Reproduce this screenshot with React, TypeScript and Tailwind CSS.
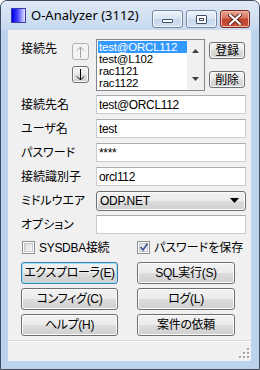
import React from "react";

const FONT =
  "font-[family-name:'Liberation_Sans','Noto_Sans_CJK_JP',sans-serif] [font-feature-settings:'palt']";

function Btn({
  children,
  className = "",
  focused = false,
}: {
  children: React.ReactNode;
  className?: string;
  focused?: boolean;
}) {
  return (
    <div
      className={`flex items-center justify-center rounded-[3px] border text-[12px] leading-none tracking-[-0.3px] text-black bg-[linear-gradient(#f2f2f2_0%,#ebebeb_50%,#dddddd_50%,#cfcfcf_100%)] ${
        focused
          ? "border-[#3c7fb1] shadow-[inset_0_0_0_1px_#a7e1f7]"
          : "border-[#707070] shadow-[inset_0_0_0_1px_#fbfbfb]"
      } ${className}`}
    >
      {children}
    </div>
  );
}

function Input({ value }: { value: string }) {
  return (
    <div className="flex h-[19px] w-[150px] items-center border border-[#c9ccd3] border-t-[#abadb3] bg-white pl-[2px] text-[12px] leading-none tracking-[-0.35px]">
      {value}
    </div>
  );
}

function Label({ text }: { text: string }) {
  return <div className="w-[75px] text-[12px] leading-none">{text}</div>;
}

function Row({ label, children }: { label: string; children: React.ReactNode }) {
  return (
    <div className="flex h-[19px] items-center">
      <Label text={label} />
      {children}
    </div>
  );
}

function Checkbox({ checked }: { checked: boolean }) {
  return (
    <div className="flex h-[13px] w-[13px] items-center justify-center border border-[#8e8f8f] bg-white">
      <div className="relative h-[9px] w-[9px] border border-[#c6c9ce] bg-[linear-gradient(135deg,#dcdedf,#f7f7f7)]">
        {checked && (
          <svg
            className="absolute left-[-1px] top-[-2px]"
            width="10"
            height="10"
            viewBox="0 0 10 10"
          >
            <path
              d="M1.5 5 L4 8 L8.5 1.5"
              fill="none"
              stroke="#4a5f97"
              strokeWidth="1.8"
            />
          </svg>
        )}
      </div>
    </div>
  );
}

function Arrow({ up, color }: { up: boolean; color: string }) {
  return (
    <svg width="9" height="12" viewBox="0 0 9 12">
      <g transform={up ? "" : "rotate(180 4.5 6)"}>
        <path d="M4.5 1 L4.5 12" stroke={color} strokeWidth="1" />
        <path d="M1 4.5 L4.5 1 L8 4.5" fill="none" stroke={color} strokeWidth="1" />
      </g>
    </svg>
  );
}

export default function App() {
  const items = ["test@ORCL112", "test@L102", "rac1121", "rac1122"];
  return (
    <div className={`h-[370px] w-[260px] bg-white ${FONT} text-black`}>
      <div className="flex h-[370px] w-[260px] flex-col rounded-t-[7px] border border-[#3f4d5e] bg-[#bcd3ed]">
        {/* Title bar */}
        <div className="relative flex h-[29px] items-center rounded-t-[6px] bg-[linear-gradient(#dfe9f6,#c6d9ef)] pl-[10px] pr-[9px]">
          <div className="h-[15px] w-[15px] border border-[#3a3aa8] bg-[linear-gradient(90deg,#0000e8,#3b3bff_40%,#e6e6ff)]" />
          <div className="ml-[5px] font-[family-name:'Noto_Sans',sans-serif] text-[13px] leading-none text-black [font-feature-settings:normal]">
            O-Analyzer (3112)
          </div>
          <div className="ml-auto flex items-center gap-[3px] self-start pt-[9px]">
            <div className="flex h-[18px] w-[31px] items-end justify-center rounded-[3px] border border-[#7489a5] bg-[linear-gradient(#eef4fb,#d7e4f3_50%,#c5d6ec_51%,#d3e2f4)] pb-[4px] shadow-[inset_0_0_0_1px_#f3f7fc]">
              <div className="h-[4px] w-[11px] rounded-[1px] border border-[#3d4f66] bg-white" />
            </div>
            <div className="flex h-[18px] w-[31px] items-center justify-center rounded-[3px] border border-[#7489a5] bg-[linear-gradient(#eef4fb,#d7e4f3_50%,#c5d6ec_51%,#d3e2f4)] shadow-[inset_0_0_0_1px_#f3f7fc]">
              <div className="flex h-[9px] w-[11px] items-center justify-center rounded-[1px] border border-[#3d4f66] bg-white">
                <div className="h-[3px] w-[5px] border border-[#3d4f66]" />
              </div>
            </div>
            <div className="flex h-[18px] w-[30px] items-center justify-center rounded-[3px] border border-[#7a2a20] bg-[linear-gradient(#e9a796,#d5725f_45%,#c0412d_50%,#c9553e)] shadow-[inset_0_0_0_1px_#eeb9ab]">
              <svg width="14" height="11" viewBox="0 0 14 11">
                <path
                  d="M2 1 L12 10 M12 1 L2 10"
                  stroke="#5a1f18"
                  strokeWidth="4"
                  strokeLinecap="round"
                />
                <path
                  d="M2 1 L12 10 M12 1 L2 10"
                  stroke="#ffffff"
                  strokeWidth="2.2"
                  strokeLinecap="round"
                />
              </svg>
            </div>
          </div>
        </div>

        {/* Client area */}
        <div className="ml-[7px] mr-[8px] flex h-[331px] flex-col bg-[#f0f0f0] pl-[13px]">
          {/* Top: connection list */}
          <div className="mt-[9px] flex h-[52px] items-start">
            <div className="mt-[4px] w-[51px] text-[12px] leading-none">接続先</div>
            <div className="flex w-[17px] flex-col">
              <Btn className="mt-[4px] h-[17px] w-[17px] border-[#adb2b5] shadow-none bg-[linear-gradient(#f4f4f4,#f4f4f4)]">
                <Arrow up color="#a0a0a0" />
              </Btn>
              <Btn className="mt-[6px] h-[17px] w-[17px]">
                <Arrow up={false} color="#000000" />
              </Btn>
            </div>
            <div className="ml-[7px] flex h-[52px] w-[109px] border border-[#828790] bg-white">
              <div className="flex flex-1 flex-col pt-[1px] pl-[1px]">
                {items.map((it, i) => (
                  <div
                    key={it}
                    className={`flex h-[12px] items-center overflow-hidden pl-[1px] text-[11.5px] leading-[12px] tracking-[-0.2px] ${
                      i === 0 ? "bg-[#3399ff] text-white" : "text-black"
                    }`}
                  >
                    {it}
                  </div>
                ))}
              </div>
              <div className="flex w-[17px] flex-col items-center justify-between bg-[#f0f0f0] py-[9px]">
                <svg width="7" height="4" viewBox="0 0 7 4">
                  <path d="M0 4 L3.5 0 L7 4 Z" fill="#404040" />
                </svg>
                <svg width="7" height="4" viewBox="0 0 7 4">
                  <path d="M0 0 L3.5 4 L7 0 Z" fill="#404040" />
                </svg>
              </div>
            </div>
            <div className="ml-[4px] flex flex-col">
              <Btn className="mt-[3px] h-[17px] w-[36px]">登録</Btn>
              <Btn className="mt-[12px] h-[17px] w-[36px]">削除</Btn>
            </div>
          </div>

          {/* Fields */}
          <div className="mt-[4px] flex flex-col gap-[5px]">
            <Row label="接続先名">
              <Input value="test@ORCL112" />
            </Row>
            <Row label="ユーザ名">
              <Input value="test" />
            </Row>
            <Row label="パスワード">
              <Input value="****" />
            </Row>
            <Row label="接続識別子">
              <Input value="orcl112" />
            </Row>
            <Row label="ミドルウエア">
              <div className="flex h-[20px] w-[150px] items-center rounded-[3px] border border-[#707070] bg-[linear-gradient(#f2f2f2_0%,#ebebeb_50%,#dddddd_50%,#cfcfcf_100%)] pl-[3px] pr-[6px] text-[12px] leading-none tracking-[-0.3px] shadow-[inset_0_0_0_1px_#fbfbfb]">
                <span>ODP.NET</span>
                <svg className="ml-auto" width="9" height="5" viewBox="0 0 9 5">
                  <path d="M0 0 L9 0 L4.5 5 Z" fill="#000" />
                </svg>
              </div>
            </Row>
            <Row label="オプション">
              <Input value="" />
            </Row>
          </div>

          {/* Checkboxes */}
          <div className="mt-[7px] flex h-[13px] items-center">
            <div className="ml-[1px] flex w-[115px] items-center">
              <Checkbox checked={false} />
              <span className="ml-[4px] text-[12px] leading-none tracking-[-0.3px]">SYSDBA接続</span>
            </div>
            <div className="flex items-center">
              <Checkbox checked={true} />
              <span className="ml-[4px] text-[12px] leading-none">パスワードを保存</span>
            </div>
          </div>

          {/* Buttons */}
          <div className="mt-[8px] grid w-[214px] grid-cols-[97px_98px] gap-x-[19px] gap-y-[4px]">
            <Btn className="h-[22px]" focused>
              エクスプローラ(E)
            </Btn>
            <Btn className="h-[22px]">SQL実行(S)</Btn>
            <Btn className="h-[22px]">コンフィグ(C)</Btn>
            <Btn className="h-[22px]">ログ(L)</Btn>
            <Btn className="h-[22px]">ヘルプ(H)</Btn>
            <Btn className="h-[22px]">案件の依頼</Btn>
          </div>

          {/* Status bar */}
          <div className="relative -ml-[13px] mt-auto h-[21px] border-t border-[#d9d9d9] bg-[#f0f0f0] shadow-[inset_0_1px_0_#ffffff]">
            <svg
              className="absolute bottom-[2px] right-[1px]"
              width="12"
              height="12"
              viewBox="0 0 12 12"
            >
              {[
                [9, 1],
                [5, 5],
                [9, 5],
                [1, 9],
                [5, 9],
                [9, 9],
              ].map(([x, y]) => (
                <g key={`${x}-${y}`}>
                  <rect x={x + 1} y={y + 1} width="2" height="2" fill="#ffffff" />
                  <rect x={x} y={y} width="2" height="2" fill="#a3a3a3" />
                </g>
              ))}
            </svg>
          </div>
        </div>
      </div>
    </div>
  );
}
